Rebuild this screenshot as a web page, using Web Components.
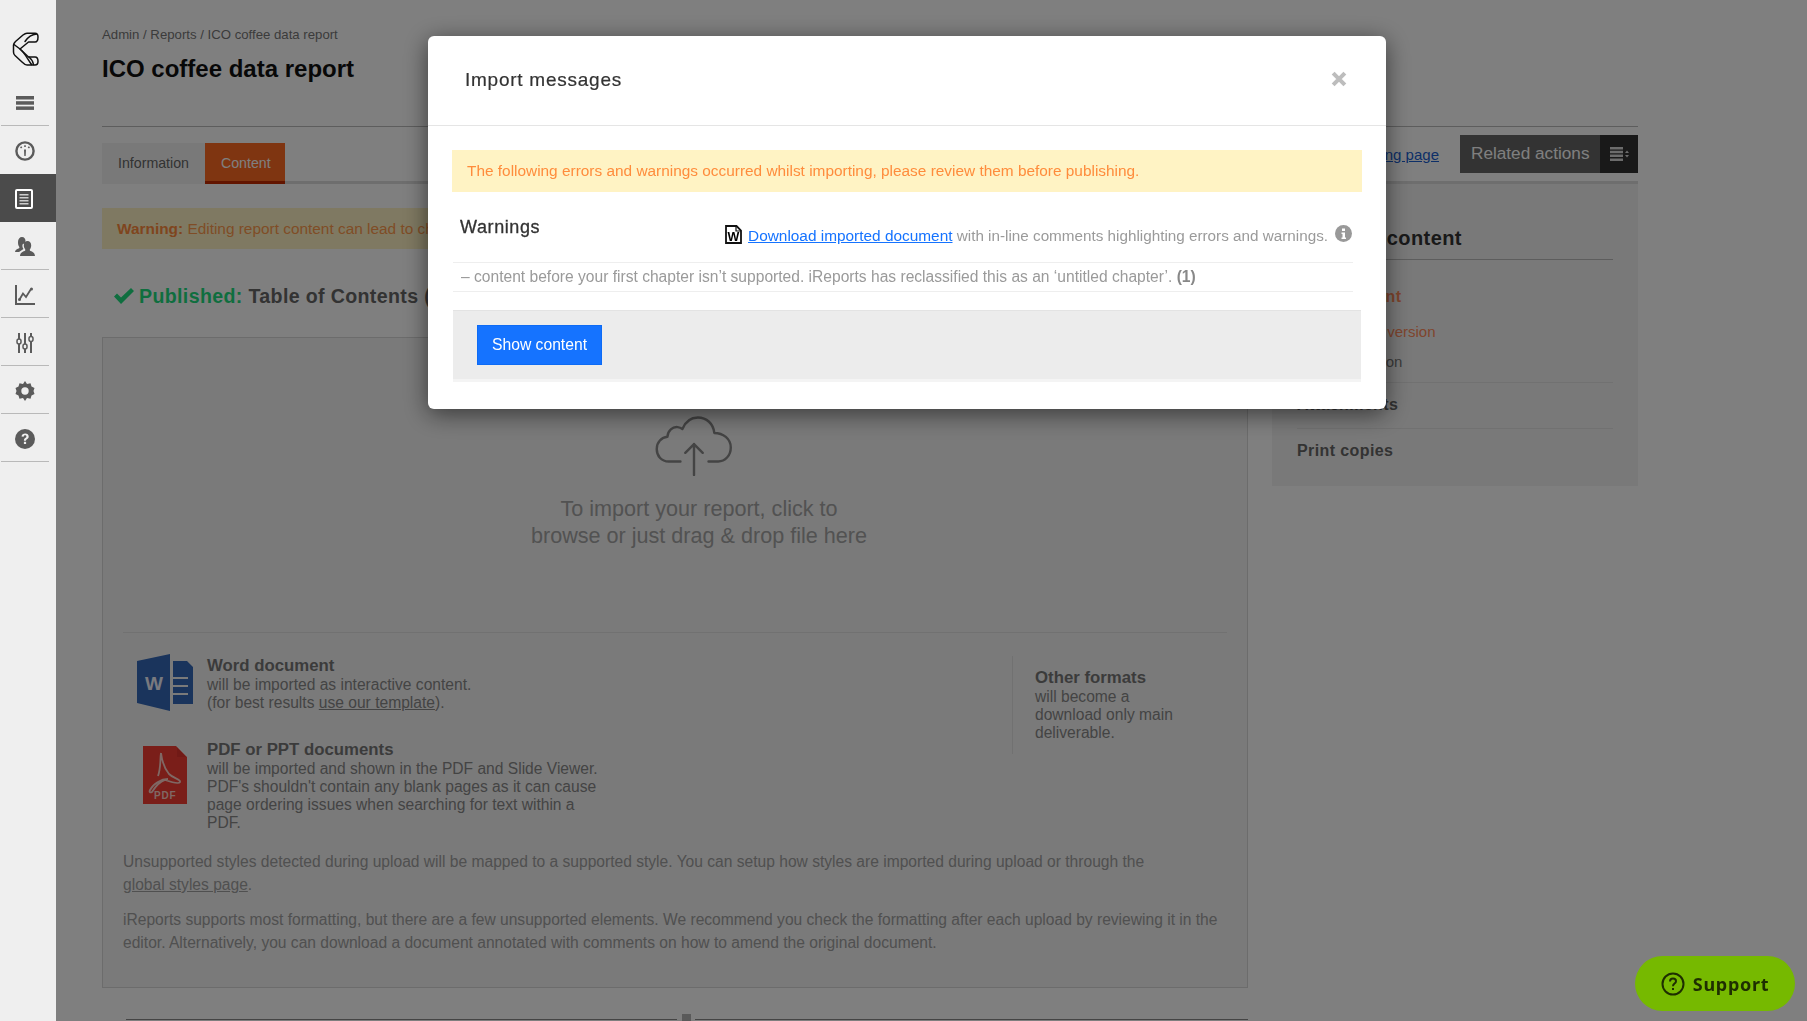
<!DOCTYPE html>
<html lang="en"><head><meta charset="utf-8"><title>ICO coffee data report</title>
<style>
html,body{margin:0;height:100%;overflow:hidden;background:#fff}
body{font-family:"Liberation Sans",Arial,sans-serif;color:#333}
app-shell{height:1021px}
</style></head><body>
<app-shell>
  <app-sidebar slot="nav"></app-sidebar>
  <report-page></report-page>
</app-shell>
<modal-backdrop></modal-backdrop>
<import-modal></import-modal>
<support-button></support-button>
<script>
const el=(name,css,html)=>customElements.define(name,class extends HTMLElement{
  constructor(){super();const r=this.attachShadow({mode:'open'});
    r.innerHTML='<style>'+css+'</style>'+html;}
});
el('app-shell',':host{display:flex;overflow:hidden}','<slot name="nav"></slot><slot></slot>');

el('app-sidebar',`
:host{display:block;width:56px;flex:none;height:1021px;background:#efefef;position:relative;z-index:20}
.logo{height:78px;display:flex;justify-content:flex-start;align-items:flex-start;padding-left:12px;box-sizing:border-box}
.logo svg{margin-top:32px}
.it{margin:0 7px 0 1px;padding-top:2px;box-sizing:content-box;height:45px;border-bottom:1px solid #b9b9b9;display:flex;align-items:center;justify-content:center;color:#5b5b5b}
.it.n{border-bottom:0;height:46px}
.act{height:48px;background:#4b4b4b;display:flex;align-items:center;justify-content:center;padding:1px 8px 0 0;box-sizing:border-box}
`,`
<div class="logo"><svg width="28" height="34" viewBox="12 32 28 34" fill="none" stroke="#111" stroke-width="1.500" stroke-linejoin="round" stroke-linecap="round">
<path d="M27 33.200H35C37 33.200 38 34.500 38 37C38 40 37 42 35 42H28.500L20 49L28.500 57H35C37 57 38 59 38 61.500C38 64 37 65 35 65H27C25 65 24 64 22 62L15 55.500C13.800 54.500 13.500 53.500 13.500 52V45C13.500 43.500 14 43 15.500 41.500L23 35C24.500 33.800 25.500 33.200 27 33.200Z"/>
<path d="M25 41.500C28 37 31 34.500 36.500 34M20 49 14 44.500M20 49C24 52 27 58 31.500 64.500M29 57C32 59.500 33 61.500 33.500 64.500"/></svg></div>
<div class="it"><svg width="18" height="14" viewBox="0 0 18 14" fill="#5b5b5b"><rect width="18" height="3.500"/><rect y="5.200" width="18" height="3.500"/><rect y="10.400" width="18" height="3.500"/></svg></div>
<div class="it n"><svg width="20" height="20" viewBox="0 0 20 20"><circle cx="10" cy="10" r="8.600" fill="none" stroke="#5b5b5b" stroke-width="2.400"/><path d="M9 8.500h2l-.3 6.500H9.300Z M9.200 4.300h1.600v1.800H9.200Z M5 6.300l1.300-1 1 1.200-1.300 1Z M15 6.300l-1.300-1-1 1.200 1.300 1Z" fill="#5b5b5b"/></svg></div>
<div class="act"><svg width="18" height="20" viewBox="0 0 18 20"><rect x="1" y="1" width="16" height="18" rx="1" fill="#4b4b4b" stroke="#fff" stroke-width="2"/><path d="M4.500 5h9v1.500h-9Zm0 3h9v1.500h-9Zm0 3h9v1.500h-9Zm0 3h9v1.500h-9Z" fill="#ccc"/></svg></div>
<div class="it"><svg width="20" height="20" viewBox="0 0 20 20" fill="#5b5b5b"><path d="M7 0c2.300 0 3.500 1.700 3.500 4 0 1.300-.4 2.300-1 3-.9-.6-1.700-.2-2 .8-.3 1.500.1 3 1 4.200L4 15H0c0-2 2-3 3.500-3.500 1-.4 1-1.200.7-1.800C3.300 8.500 3 7 3 5c0-3 1.700-5 4-5Z"/><path d="M12.500 4c2.200 0 3.700 1.700 3.700 4.300 0 1.700-.5 3-1.200 3.900-.4.700-.3 1.400.6 1.800 1.700.7 4.100 1.500 4.400 5H5c.3-3.500 2.800-4.300 4.500-5 .9-.4 1-1.100.6-1.800-.8-1-1.300-2.200-1.300-3.900C8.800 5.700 10.300 4 12.500 4Z"/></svg></div>
<div class="it"><svg width="20" height="20" viewBox="0 0 20 20"><path d="M1 0v19h19" fill="none" stroke="#5b5b5b" stroke-width="2"/><path d="M4.500 14.500 8 8.500l3 3.500 5-8" fill="none" stroke="#5b5b5b" stroke-width="1.800"/><circle cx="4.500" cy="14.500" r="1.500" fill="#5b5b5b"/><circle cx="16.500" cy="4" r="1.500" fill="#5b5b5b"/></svg></div>
<div class="it"><svg width="18" height="20" viewBox="0 0 18 20" fill="none" stroke="#5b5b5b"><path d="M3 0v20M9 0v20M15 0v20" stroke-width="2"/><g fill="#efefef" stroke-width="1.500"><rect x="1" y="6" width="4" height="5" rx="2"/><rect x="7" y="11" width="4" height="5" rx="2"/><rect x="13" y="3.500" width="4" height="5" rx="2"/></g></svg></div>
<div class="it"><svg width="20" height="20" viewBox="0 0 20 20"><path d="M10 0l2 3 3.500-.7 1 3.200 3 1.500-1 3 1 3-3 1.500-1 3.200-3.500-.7-2 3-2-3-3.500.7-1-3.200-3-1.500 1-3-1-3 3-1.500 1-3.200L8 3Z" fill="#5b5b5b"/><circle cx="10" cy="10" r="3.700" fill="#efefef"/></svg></div>
<div class="it"><svg width="20" height="20" viewBox="0 0 20 20"><circle cx="10" cy="10" r="10" fill="#5b5b5b"/><path d="M6.500 7.500C6.700 5.500 8.200 4.500 10.200 4.500c2.100 0 3.500 1.200 3.500 2.900 0 2.700-2.700 2.500-2.700 4.300H8.900c0-2.900 2.500-2.700 2.500-4.200 0-.7-.5-1.200-1.300-1.200-.9 0-1.300.6-1.500 1.500ZM8.900 12.800h2.200V15H8.900Z" fill="#efefef"/></svg></div>
`);

el('report-page',`
:host{display:block;flex:1;min-width:0;height:1021px;box-sizing:border-box;padding:0 169px 0 46px;background:#fff;overflow:hidden}
.crumb{font-size:13.200px;color:#777;padding-top:27px;line-height:16px}
h1{margin:0;font-size:24px;font-weight:700;color:#111;line-height:30px;margin-top:11px}
.hd{height:42px;border-bottom:1px solid #bbb}
.tabsrow{display:flex;justify-content:space-between;align-items:flex-start;padding-top:8px;border-bottom:3px solid #ddd;height:46px}
.tabs{display:flex;margin-top:8px}
.tab{height:41px;line-height:40px;box-sizing:border-box;font-size:14.200px;padding:0 16px;background:#f3f3f3;color:#666}
.tab.on{background:#ff6a22;color:#fff;border-bottom:3px solid #c42a00;padding:0 14px 0 16px}
.right{display:flex;align-items:flex-start}
.lnk{font-size:15px;color:#1a5fd0;text-decoration:underline;margin:11px 21px 0 0}
.rel{display:flex;height:38px;background:#666;color:#fff;font-size:17.200px;line-height:37px}
.rel b{font-weight:400;padding:0 0 0 11px;width:140px;box-sizing:border-box}
.rel i{width:38px;background:#333;display:flex;align-items:center;justify-content:center}
.cols{display:flex;gap:24px;align-items:flex-start}
.lc{width:1146px;flex:none}
.warn{margin-top:24px;height:41px;line-height:42px;background:#fff3c4;color:#ff9a4d;padding-left:15px;font-size:15.400px;white-space:nowrap;overflow:hidden}
.warn b{color:#ff8a3d}
.pub{height:88px;display:flex;align-items:center;padding:6px 0 0 12px;font-size:19.600px;font-weight:700;color:#666;letter-spacing:.35px;gap:5px;box-sizing:border-box;white-space:nowrap}
.pub em{font-style:normal;color:#1edc7e}
.bottom{margin:31px 0 0 24px;border-top:1px solid #888;height:1px;position:relative}
.tick{position:absolute;left:551px;top:-6px;width:18px;height:8px;background:#fff;display:flex;justify-content:center}
.tick i{display:block;width:9px;height:7px;background:#b5b5b5}
`,`
<div class="crumb">Admin / Reports / ICO coffee data report</div>
<h1>ICO coffee data report</h1>
<div class="hd"></div>
<div class="tabsrow">
  <div class="tabs"><div class="tab">Information</div><div class="tab on">Content</div></div>
  <div class="right"><a class="lnk">Go to the landing page</a>
  <div class="rel"><b>Related actions</b><i><svg width="19" height="14" viewBox="0 0 19 14" fill="#d8d8d8"><path d="M0 0h13v2.500H0Zm0 3.800h13v2.500H0Zm0 3.800h13v2.500H0Zm0 3.800h13V14H0ZM15 6h4L17 3.500ZM15 8h4L17 10.500Z"/></svg></i></div></div>
</div>
<div class="cols">
 <div class="lc">
  <div class="warn"><b>Warning:</b> Editing report content can lead to changes in published versions of this report.</div>
  <div class="pub"><svg width="20" height="16" viewBox="0 0 20 16"><path d="M0 8.500 3 5.500l4 4L17 0l3 3L7 16Z" fill="#1edc7e"/></svg><span><em>Published:</em> Table of Contents (v1)</span></div>
  <upload-box></upload-box>
  <div class="bottom"><div class="tick"><i></i></div></div>
 </div>
 <side-panel></side-panel>
</div>
`);

el('upload-box',`
:host{display:block;height:651px;box-sizing:border-box;border:1px solid #d8d8d8;background:#f5f5f5;padding:0 20px;color:#888}
.drop{height:295px;box-sizing:border-box;padding:78px 0 0 48px;text-align:center;border-bottom:1px solid #e2e2e2;font-size:21.600px;line-height:26.500px;color:#a4a4a4}
.drop svg{display:block;margin:0 auto 20px;padding-right:10px}
.fm{display:flex;justify-content:space-between;padding-top:23px;font-size:15.600px;line-height:18px;color:#888}
.l{width:700px}
.row{display:flex}
.row+.row{margin-top:28px}
.ico{width:84px;flex:none;box-sizing:border-box}
.t{width:396px}
strong{display:block;color:#777;font-weight:700;font-size:16.800px;line-height:20px}
a{text-decoration:underline}
.o{width:215px;box-sizing:border-box;border-left:1px solid #e2e2e2;padding:12px 0 0 22px;height:98px}
p{margin:0;font-size:15.600px;line-height:23px;color:#a0a0a0}
.ps{padding-top:18px}
p+p{margin-top:12px}
`,`
<div class="drop">
<svg width="78" height="60" viewBox="0 0 80 62" fill="none" stroke="#888" stroke-width="2.500" stroke-linecap="round" stroke-linejoin="round"><path d="M26 47H14C6 47 1.500 41 1.500 34c0-7 5-12 11-12.500C13 15 18 11 23 11.500c2 .2 3.500 .8 5 2C31 6 37 1.500 44 1.500c9 0 16 6.500 17 16 9 0 17 6 17 15 0 8.500-6 14.500-13 14.500H55"/><path d="M40 61V29M31 38l9-9 9 9"/></svg>
To import your report, click to<br>browse or just drag &amp; drop file here
</div>
<div class="fm">
 <div class="l">
  <div class="row"><div class="ico"><svg width="56" height="57" viewBox="0 0 56 57" style="margin:-2px 0 0 14px;display:block"><path d="M0 7 33 0v57L0 49Z" fill="#3468b8"/><text x="8" y="36" font-family="Liberation Sans" font-size="19" font-weight="700" fill="#f2f4ff">W</text><path d="M36 7h14l6 6v37H36v-9h15v-2H36v-6h15v-2H36v-6h15v-2H36v-4Z" fill="#3468b8"/></svg></div>
   <div class="t"><strong>Word document</strong>will be imported as interactive content.<br>(for best results <a>use our template</a>).</div></div>
  <div class="row"><div class="ico"><svg width="44" height="58" viewBox="0 0 44 58" style="margin:6px 0 0 20px;display:block"><path d="M0 0h33l11 11v47H0Z" fill="#f53c32"/><path d="M34 1.500V11H43Z" fill="#e2352c"/><path d="M34 0l10 10.500" stroke="#fff" stroke-width=".8" fill="none" opacity=".5"/><path d="M18 7c1 8 3 15 8 21 5 5 12 5 11 8-1 2-9 0-15-2-6 2-9 6-13 12-2 1-3 0-2-2 3-6 11-11 18-11M18 7c-1 6 0 15-3 23" fill="none" stroke="#ffd0c8" stroke-width="1.800"/><text x="11" y="53" font-family="Liberation Sans" font-size="10" font-weight="700" fill="#ffd0c8" letter-spacing=".8">PDF</text></svg></div>
   <div class="t"><strong>PDF or PPT documents</strong>will be imported and shown in the PDF and Slide Viewer. PDF's shouldn't contain any blank pages as it can cause page ordering issues when searching for text within a PDF.</div></div>
 </div>
 <div class="o"><strong>Other formats</strong>will become a<br>download only main<br>deliverable.</div>
</div>
<div class="ps">
<p>Unsupported styles detected during upload will be mapped to a supported style. You can setup how styles are imported during upload or through the<br><a>global styles page</a>.</p>
<p>iReports supports most formatting, but there are a few unsupported elements. We recommend you check the formatting after each upload by reviewing it in the editor. Alternatively, you can download a document annotated with comments on how to amend the original document.</p>
</div>
`);

el('side-panel',`
:host{display:block;width:366px;flex:none;height:302px;box-sizing:border-box;background:#f3f3f3;padding:0 25px;white-space:nowrap}
h2{margin:0;height:76px;box-sizing:border-box;padding:40px 0 0 7px;line-height:28px;font-size:20px;font-weight:700;color:#333;border-bottom:1px solid #bbb;letter-spacing:.4px}
.g{height:123px;border-bottom:1px solid #e3e3e3;box-sizing:border-box;padding-top:25px}
.a{font-size:16px;font-weight:700;color:#ff8a5a;line-height:24px;letter-spacing:.5px}
.b{font-size:15px;color:#ff8a5a;line-height:24px;margin-top:11px;padding-left:36px}
.c{font-size:15px;color:#777;line-height:24px;margin-top:6px;padding-left:32px}
.r{font-size:16px;font-weight:700;color:#666;height:45px;line-height:44px;border-bottom:1px solid #e3e3e3;letter-spacing:.4px}
.r:last-child{border:0}
`,`
<h2>Manage content</h2>
<div class="g"><div class="a">Main content</div><div class="b">Current version</div><div class="c">Publication</div></div>
<div class="r">Attachments</div>
<div class="r">Print copies</div>
`);

el('modal-backdrop',':host{position:fixed;inset:0;background:rgba(0,0,0,.5);z-index:10;display:block}','');

el('import-modal',`
:host{position:fixed;left:428px;top:36px;width:958px;height:373px;background:#fff;border-radius:6px;box-shadow:0 5px 25px rgba(0,0,0,.55);z-index:30;display:block;font-family:"Liberation Sans",Arial,sans-serif}
header{border-bottom:1px solid #e5e5e5;display:flex;justify-content:space-between;align-items:center;padding:0 37px 2px;box-sizing:content-box;height:87px}
h3{margin:0;font-size:19px;font-weight:400;color:#333;letter-spacing:.75px;-webkit-text-stroke:.2px #333}
.x{width:16px;height:16px;margin:-2px 2px 0 0}
.body{padding:24px 24px 0}
.al{height:42px;line-height:42px;background:#fff3c4;color:#ff8c3c;font-size:15.400px;padding-left:15px}
.hd{display:flex;justify-content:space-between;height:71px;box-sizing:border-box;border-bottom:1px solid #eee;margin:0 9px 0 1px;padding:0 0 0 7px}
.hd h4{margin:24px 0 0;font-size:18px;font-weight:400;color:#333;letter-spacing:.6px;-webkit-text-stroke:.3px #333;line-height:22px}
.dl{display:flex;align-items:flex-start;margin-top:33px;font-size:15.250px;color:#9a9a9a;line-height:18px;white-space:pre;padding-right:1px}
.dl a{color:#1573ff;text-decoration:underline;font-size:15.400px}
.doc{margin:0 6px 0 0;flex:none}
.dl span{margin-top:2px}
.inf{margin:0 0 0 7px;flex:none}
.msg{height:29px;line-height:28px;box-sizing:border-box;border-bottom:1px solid #eee;margin:0 9px 0 1px;padding-left:8px;font-size:15.600px;color:#9a9a9a}
.msg b{color:#888}
.ft{margin:18px 1px 0 1px;height:72px;box-sizing:border-box;background:#ececec;border-top:1px solid #e3e3e3;border-bottom:3px solid #f4f4f4;padding:14px 24px}
button{display:block;width:125px;height:40px;background:#1573ff;border:1px solid #0d6bf5;color:#fff;font:15.700px "Liberation Sans",Arial,sans-serif;padding:0}
`,`
<header><h3>Import messages</h3><svg class="x" viewBox="0 0 15 15"><path d="M2 2l11 11M13 2 2 13" stroke="#bdbdbd" stroke-width="3.800"/></svg></header>
<div class="body">
 <div class="al">The following errors and warnings occurred whilst importing, please review them before publishing.</div>
 <div class="hd"><h4>Warnings</h4><div class="dl"><svg class="doc" width="17" height="19" viewBox="0 0 17 19"><path d="M1 1h10.500L16 5.500V18H1Z" fill="#fff" stroke="#111" stroke-width="1.800"/><path d="M11 1v5h5" fill="none" stroke="#111" stroke-width="1.200"/><text x="2.500" y="16" font-family="Liberation Sans" font-size="12.500" font-weight="700" fill="#000">W</text></svg><span><a>Download imported document</a> with in-line comments highlighting errors and warnings.</span><svg class="inf" width="17" height="17" viewBox="0 0 17 17"><circle cx="8.500" cy="8.500" r="8.500" fill="#999"/><path d="M7 3.500h3v2.500H7ZM6.500 7.500h3.500v5h1v1.500H6.500v-1.500h1v-3.500h-1Z" fill="#fff"/></svg></div></div>
 <div class="msg">– content before your first chapter isn’t supported. iReports has reclassified this as an ‘untitled chapter’. <b>(1)</b></div>
 <div class="ft"><button>Show content</button></div>
</div>
`);

el('support-button',`
:host{position:fixed;left:1635px;top:956px;width:160px;height:55px;border-radius:28px;background:#76b900;z-index:40;display:flex;align-items:center;justify-content:center;gap:8px;font:700 18px "Noto Sans","Open Sans",sans-serif;color:#1e2e00;letter-spacing:.7px}
`,`<svg width="24" height="24" viewBox="0 0 24 24" fill="none" stroke="#1e2e00" stroke-width="2"><circle cx="12" cy="12" r="10.500"/><path d="M9 9.500C9 7.500 10.300 6.500 12 6.500s3 1 3 2.700c0 2.500-3 2.300-3 5" /><path d="M12 16v2"/></svg><span>Support</span>`);
</script>
</body></html>
